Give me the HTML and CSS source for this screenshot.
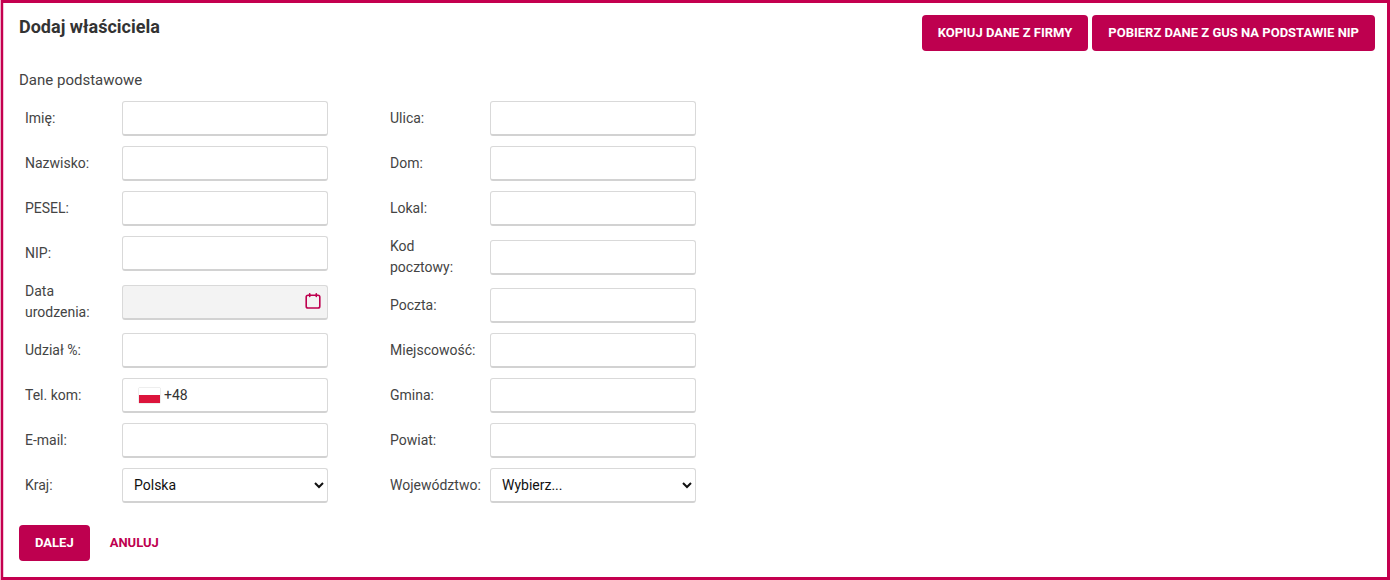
FILE: index.html
```html
<!DOCTYPE html>
<html lang="pl">
<head>
<meta charset="utf-8">
<title>Dodaj właściciela</title>
<link rel="stylesheet" href="styles.css">
</head>
<body>
<form class="panel">
  <header class="panel-header">
    <h1 class="title">Dodaj właściciela</h1>
    <div class="header-actions">
      <button type="button" class="btn btn-primary">KOPIUJ DANE Z FIRMY</button>
      <button type="button" class="btn btn-primary">POBIERZ DANE Z GUS NA PODSTAWIE NIP</button>
    </div>
  </header>
  <h2 class="section-title">Dane podstawowe</h2>
  <div class="columns">
    <div class="column column-person">
      <div class="row"><label class="label" for="imie">Imię:</label><input class="control" id="imie" type="text"></div>
      <div class="row"><label class="label" for="nazwisko">Nazwisko:</label><input class="control" id="nazwisko" type="text"></div>
      <div class="row"><label class="label" for="pesel">PESEL:</label><input class="control" id="pesel" type="text"></div>
      <div class="row"><label class="label" for="nip">NIP:</label><input class="control" id="nip" type="text"></div>
      <div class="row">
        <label class="label" for="data">Data<br>urodzenia:</label>
        <div class="field">
          <input class="control control-readonly" id="data" type="text" readonly>
          <button type="button" class="calendar-btn" aria-label="Wybierz datę">
            <svg width="16" height="16" viewBox="0 0 16 16" fill="none" stroke="#be004f" stroke-linecap="round" aria-hidden="true"><rect x="1.2" y="2.2" width="13.6" height="12.8" rx="1.8" stroke-width="1.6"/><path d="M4.7 .9v2.4M11.3 .9v2.4" stroke-width="1.7"/></svg>
          </button>
        </div>
      </div>
      <div class="row"><label class="label" for="udzial">Udział %:</label><input class="control" id="udzial" type="text"></div>
      <div class="row">
        <label class="label" for="tel">Tel. kom:</label>
        <div class="field">
          <input class="control control-phone" id="tel" type="tel" value="+48">
          <span class="flag"></span>
        </div>
      </div>
      <div class="row"><label class="label" for="email">E-mail:</label><input class="control" id="email" type="email"></div>
      <div class="row"><label class="label" for="kraj">Kraj:</label><select class="control control-select" id="kraj"><option>Polska</option></select></div>
    </div>
    <div class="column column-address">
      <div class="row"><label class="label" for="ulica">Ulica:</label><input class="control" id="ulica" type="text"></div>
      <div class="row"><label class="label" for="dom">Dom:</label><input class="control" id="dom" type="text"></div>
      <div class="row"><label class="label" for="lokal">Lokal:</label><input class="control" id="lokal" type="text"></div>
      <div class="row"><label class="label" for="kod">Kod<br>pocztowy:</label><input class="control" id="kod" type="text"></div>
      <div class="row"><label class="label" for="poczta">Poczta:</label><input class="control" id="poczta" type="text"></div>
      <div class="row"><label class="label" for="miejscowosc">Miejscowość:</label><input class="control" id="miejscowosc" type="text"></div>
      <div class="row"><label class="label" for="gmina">Gmina:</label><input class="control" id="gmina" type="text"></div>
      <div class="row"><label class="label" for="powiat">Powiat:</label><input class="control" id="powiat" type="text"></div>
      <div class="row"><label class="label" for="woj">Województwo:</label><select class="control control-select" id="woj"><option>Wybierz...</option></select></div>
    </div>
  </div>
  <footer class="panel-footer">
    <button type="submit" class="btn btn-primary">DALEJ</button>
    <button type="button" class="btn btn-link">ANULUJ</button>
  </footer>
</form>
</body>
</html>
```
FILE: styles.css
```css
* {
  box-sizing: border-box;
}

body {
  margin: 0;
  background: #fff;
  color: #444;
  font: 14px/21px Roboto, "Liberation Sans", sans-serif;
}

.panel {
  min-height: 100vh;
  margin-left: 1px;
  padding: 12px 12px 16px 16px;
  border: 3px solid #c4004f;
  border-left-width: 2px;
  box-shadow: -1px 0 #eeb0c9, inset 1px 0 #f3c6d8;
}

.panel-header {
  display: flex;
  justify-content: space-between;
  align-items: flex-start;
}

.title {
  margin: 0;
  color: #333;
  font-size: 18px;
  font-weight: 700;
  line-height: 24px;
}

.header-actions {
  display: flex;
  gap: 4px;
}

.btn {
  height: 36px;
  padding: 0 16px;
  border: 0;
  border-radius: 4px;
  font: 700 13px/20px Roboto, "Liberation Sans", sans-serif;
  cursor: pointer;
}

.btn-primary {
  background: #be004f;
  color: #fff;
}

.btn-link {
  background: transparent;
  color: #be004f;
}

.section-title {
  margin: 17px 0 4px;
  font-size: 15px;
  font-weight: 400;
  line-height: 24px;
}

.columns {
  display: flex;
  gap: 62px;
  padding-left: 6px;
}

.row {
  display: flex;
  align-items: center;
  padding: 5px 0;
}

.label {
  flex: none;
}

.column-person .label {
  width: 97px;
}

.column-address .label {
  width: 100px;
}

.field {
  position: relative;
}

.control {
  display: block;
  width: 206px;
  height: 35px;
  padding: 0 11px;
  border: 1px solid #d9d9d9;
  border-bottom: 2px solid #d2d2d2;
  border-radius: 3px;
  background: #fff;
  color: #333;
  font: inherit;
}

.control-readonly {
  background: #f3f3f3;
}

.control-phone {
  padding-left: 41px;
}

.control-select {
  padding: 0 3px 0 7px;
  color: #111;
}

.calendar-btn {
  position: absolute;
  top: 8px;
  right: 7px;
  padding: 0;
  border: 0;
  background: none;
  line-height: 0;
  cursor: pointer;
}

.flag {
  position: absolute;
  top: 10px;
  left: 17px;
  width: 21px;
  height: 15px;
  background: linear-gradient(#fff 50%, #dc143c 50%);
  box-shadow: 0 0 1px #999;
}

.panel-footer {
  display: flex;
  gap: 4px;
  margin-top: 17px;
}
```
